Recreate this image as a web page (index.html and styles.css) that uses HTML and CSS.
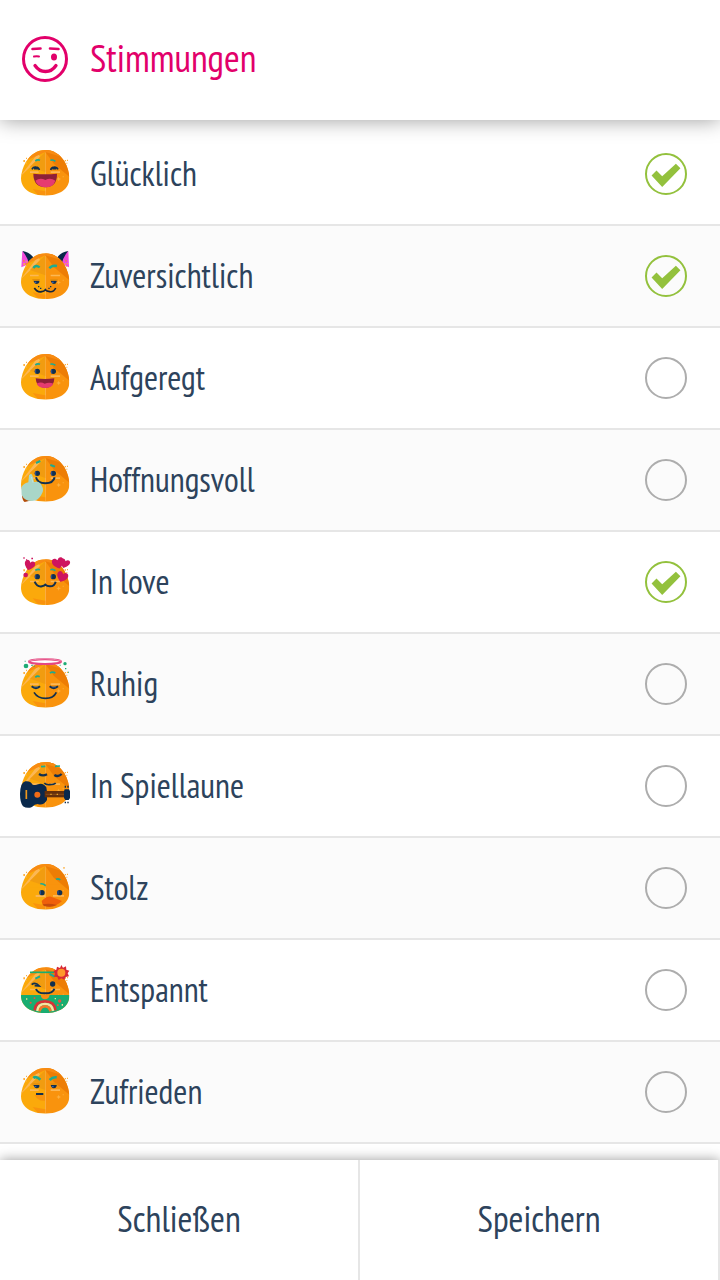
FILE: index.html
```
<!DOCTYPE html>
<html lang="de">
<head>
    <meta charset="UTF-8">
    <meta name="viewport" content="width=device-width, initial-scale=1.0">
    <title>Stimmungen</title>
    <link rel="stylesheet" href="styles.css">
</head>
<body>
    <!-- shared shapes -->
    <svg class="defs" aria-hidden="true">
        <defs>
            <path id="shape" d="M106 30C130 30 151 44 163 64C173 81 178 99 178 115C178 149 146 167 106 167C66 167 33 149 33 115C33 99 39 81 49 64C61 44 82 30 106 30Z"/>
            <clipPath id="head-clip"><use href="#shape"/></clipPath>
            <g id="head">
                <g clip-path="url(#head-clip)">
                    <path fill="#fba90b" d="M30 25h76v145H30z"/>
                    <path fill="#f9930d" d="M106 25h76v145h-76z"/>
                    <path fill="#fcb754" d="M30 110L84 40L90 50L64 78Z"/>
                    <path fill="#f19c10" d="M106 36L60 80L106 96Z"/>
                    <path fill="#ed7d05" d="M106 36L132 72L180 112V30H106Z"/>
                    <path fill="#f88b12" d="M50 62C64 40 84 28 106 28C128 28 142 37 153 50L106 36L58 58Z"/>
                    <path fill="#f9930d" d="M68 147L106 154V165H84Z"/>
                    <path fill="#fcb754" d="M60 94h26v5H60zM122 94h28v5h-28z"/>
                </g>
                <g fill="#fcb040">
                    <path d="M40 60h5v6h-5zM48 53h3v4h-3zM47 67h3v4h-3zM164 60h4v4h-4zM171 59h3v4h-3zM169 68h3v3h-3z"/>
                    <path d="M146 110l2 5 5 2-5 2-2 5-2-5-5-2 5-2zM158 109h3v3h-3z"/>
                </g>
            </g>
            <g id="brows" fill="none" stroke="#1cab92" stroke-width="5">
                <path d="M76 63Q82 58 90 61M121 61Q130 58 136 64"/>
            </g>
            <g id="eyes">
                <circle cx="82" cy="82" r="8" fill="#12304f"/>
                <circle cx="130" cy="82" r="8" fill="#12304f"/>
                <path d="M77 76v12M125 76v12" stroke="#31549c" stroke-width="3"/>
            </g>
            <g id="half-eyes">
                <path fill="#12304f" d="M70 82h18v5q-2 5-8 5t-8-7zM122 82h18v3q-2 7-8 7t-8-5z"/>
                <path d="M74 87h5M126 87h5" stroke="#3b62b5" stroke-width="4"/>
                <path fill="#e58e0b" d="M67 77h22v4H67zM121 77h22v4h-22z"/>
            </g>
            <path id="heart" d="M0 9C-7 4-12-1-10-7C-8-12-2-11 0-6C2-11 8-12 10-7C12-1 6 5 0 9Z"/>
        </defs>
    </svg>

    <header class="header">
        <svg class="header-icon" viewBox="0 0 46 46" fill="none" stroke="#e2006a" stroke-linecap="round" aria-hidden="true">
            <circle cx="23" cy="23" r="21.500" stroke-width="3"/>
            <path stroke-width="2.600" d="M10.500 13Q14 12.500 18.500 12.500M28 12.500Q32 12.500 36.500 13"/>
            <path stroke-width="2" d="M12 20.500Q15 20 17 20.500"/>
            <ellipse cx="32" cy="21" rx="3" ry="3.500" fill="#e2006a" stroke="none"/>
            <path stroke-width="3.300" d="M13 29.500Q17 35.500 23.500 35.500T34 29.500"/>
        </svg>
        <h1>Stimmungen</h1>
    </header>

    <main class="list">
        <label class="row">
            <svg class="emoji" viewBox="30 27 150 150" aria-hidden="true">
                <use href="#head"/><use href="#brows"/>
                <path d="M66 88Q69 80 78 81Q86 81 88 90M144 88Q141 80 133 81Q124 81 122 90M72 86h12M127 86h12" fill="none" stroke="#12304f" stroke-width="5"/>
                <path fill="#8e2038" d="M70 101Q106 105 141 101Q142 140 106 142Q70 140 70 101Z"/>
                <path fill="#e63b70" d="M76 122Q90 112 106 120Q122 112 136 122Q130 142 106 142Q82 140 76 122Z"/>
            </svg>
            <span class="name">Glücklich</span>
            <input type="checkbox" checked>
        </label>
        <label class="row">
            <svg class="emoji" viewBox="30 27 150 150" aria-hidden="true">
                <path fill="#08274a" d="M38 27Q59 31 71 47L49 70ZM174 27Q152 31 141 47L163 70Z"/>
                <path fill="#f04bdc" d="M37 27L34 76L57 66Q52 43 37 27ZM175 27L177 76L155 66Q160 43 175 27Z"/>
                <path fill="#f77c45" d="M39 54h5v5h-5zM46 62h5v6h-5zM166 54h4v5h-4z"/>
                <use href="#head" y="4"/>
                <path d="M70 78Q77 67 89 76M118 79Q126 69 141 72" fill="none" stroke="#1cab92" stroke-width="7"/>
                <use href="#half-eyes" y="34"/>
                <path d="M73 138Q82 152 95 149Q102 148 106 143Q110 148 119 149Q131 151 137 138" fill="none" stroke="#12233b" stroke-width="5"/>
                <path fill="#12304f" d="M84 132h4v4h-4zM90 137h4v4h-4zM120 132h4v4h-4zM115 137h4v4h-4z"/>
            </svg>
            <span class="name">Zuversichtlich</span>
            <input type="checkbox" checked>
        </label>
        <label class="row">
            <svg class="emoji" viewBox="30 27 150 150" aria-hidden="true">
                <use href="#head"/><use href="#brows"/><use href="#eyes"/>
                <path fill="#8e2038" d="M77 103Q105 107 133 103Q133 131 105 132Q78 130 77 103Z"/>
                <path fill="#e63b70" d="M80 119Q92 112 104 119Q118 113 130 119Q124 132 105 132Q87 132 80 119Z"/>
            </svg>
            <span class="name">Aufgeregt</span>
            <input type="checkbox">
        </label>
        <label class="row">
            <svg class="emoji" viewBox="30 27 150 150" aria-hidden="true">
                <use href="#head"/><use href="#eyes"/>
                <path d="M78 51L91 45M121 57L135 62" stroke="#1cab92" stroke-width="6"/>
                <path d="M78 94Q82 112 106 112Q130 112 134 94" fill="none" stroke="#12304f" stroke-width="6"/>
                <path fill="#b34c08" d="M36 146L66 163L44 168Q36 162 36 146Z"/>
                <path fill="#a9d6c8" d="M55 109L57 88Q65 79 68 91L72 108Q91 103 96 121Q104 133 94 146Q86 163 66 165Q43 165 35 147L34 125Q39 113 55 109Z"/>
                <path d="M64 93L69 110" stroke="#c3e4d9" stroke-width="3"/>
            </svg>
            <span class="name">Hoffnungsvoll</span>
            <input type="checkbox">
        </label>
        <label class="row">
            <svg class="emoji" viewBox="30 27 150 150" aria-hidden="true">
                <use href="#head" y="4"/><use href="#brows" y="4"/><use href="#eyes" y="4"/>
                <path d="M74 101Q81 118 96 115Q103 114 106 110Q111 115 119 115Q133 116 137 101" fill="none" stroke="#12304f" stroke-width="6"/>
                <g fill="#ce145e">
                    <use href="#heart" transform="translate(58 53) scale(1.500) rotate(18)"/>
                    <use href="#heart" transform="translate(145 47) scale(1.700) rotate(-14)"/>
                    <use href="#heart" transform="translate(164 48) scale(1.400) rotate(18)"/>
                    <use href="#heart" transform="translate(156 88) scale(1.600) rotate(20)"/>
                    <path d="M40 28h4v4h-4zM64 29h5v5h-5zM48 34h3v3h-3z"/>
                    <circle cx="47" cy="81" r="7"/>
                </g>
            </svg>
            <span class="name">In love</span>
            <input type="checkbox" checked>
        </label>
        <label class="row">
            <svg class="emoji" viewBox="30 27 150 150" aria-hidden="true">
                <use href="#head" y="6"/>
                <ellipse cx="105" cy="35" rx="48" ry="7" fill="#fff" stroke="#e54882" stroke-width="6"/>
                <path d="M56 33Q105 19 154 33" fill="none" stroke="#ee8caf" stroke-width="3"/>
                <path d="M76 82Q82 76 89 80M120 69Q127 64 136 69" fill="none" stroke="#1cab92" stroke-width="5"/>
                <path d="M65 109Q78 120 90 109M119 109Q131 120 144 109" fill="none" stroke="#12304f" stroke-width="6"/>
                <path d="M72 111h12M126 111h12" stroke="#315890" stroke-width="3"/>
                <path d="M72 127Q83 145 106 145Q131 145 139 127" fill="none" stroke="#12304f" stroke-width="5"/>
                <g fill="#1cab75">
                    <circle cx="48" cy="48" r="7"/><circle cx="165" cy="41" r="5"/>
                    <path d="M44 32h3v3h-3zM64 44h4v4h-4zM71 47h3v3h-3zM149 44h3v3h-3zM165 54h4v4h-4zM174 65h3v3h-3z"/>
                </g>
            </svg>
            <span class="name">Ruhig</span>
            <input type="checkbox">
        </label>
        <label class="row">
            <svg class="emoji" viewBox="30 27 150 150" aria-hidden="true">
                <use href="#head"/>
                <path d="M93 44L106 43M135 43L150 42" stroke="#1cab92" stroke-width="5"/>
                <path d="M87 66Q98 74 111 67M133 69Q144 76 155 66" fill="none" stroke="#12304f" stroke-width="7"/>
                <path d="M103 93Q107 99 119 98Q133 98 137 93" fill="none" stroke="#12304f" stroke-width="5"/>
                <path fill="#0a294c" d="M46 88Q61 86 68 98Q77 101 84 97Q99 91 109 106L111 119V144Q100 162 83 156Q74 156 66 165Q52 171 39 163Q30 152 30 126Q31 91 46 88Z"/>
                <path fill="#65300b" d="M104 117h61v19h-61z"/>
                <path d="M107 127h55" stroke="#8a4c18" stroke-width="3"/>
                <circle cx="82" cy="128" r="9" fill="#f06b16"/>
                <path d="M49 114v27" stroke="#ee981d" stroke-width="5"/>
                <path fill="#0a294c" d="M164 112h13l3 6v20l-4 6h-10l-4-6v-20zM164 101h4v6h-4zM172 101h4v6h-4zM164 149h4v5h-4zM172 149h4v5h-4z"/>
                <path fill="#e9a42b" d="M121 125h4v4h-4zM140 125h4v4h-4z"/>
            </svg>
            <span class="name">In Spiellaune</span>
            <input type="checkbox">
        </label>
        <label class="row">
            <svg class="emoji" viewBox="30 27 150 150" aria-hidden="true">
                <use href="#head"/>
                <path fill="#fba90b" d="M58 92h48v9H58z"/>
                <path fill="#f9930d" d="M106 92h48v9h-48z"/>
                <path d="M91 90Q98 87 107 95M138 76Q145 72 151 78" fill="none" stroke="#1cab92" stroke-width="5"/>
                <path fill="#fcb754" d="M77 123h29v6H77zM129 123h33v5h-33z"/>
                <circle cx="96" cy="116" r="8" fill="#12304f"/>
                <circle cx="149" cy="116" r="8" fill="#12304f"/>
                <path d="M91 110v12M144 110v12" stroke="#31549c" stroke-width="3"/>
                <path fill="#ef600b" d="M95 141Q110 126 123 128Q139 133 156 141Q139 157 121 158Q103 158 97 149Z"/>
                <path d="M97 151Q117 146 141 153Q123 161 102 156" fill="#c54b0c"/>
                <path fill="#fcb040" d="M160 39h4v5h-4z"/>
            </svg>
            <span class="name">Stolz</span>
            <input type="checkbox">
        </label>
        <label class="row">
            <svg class="emoji" viewBox="30 27 150 150" aria-hidden="true">
                <use href="#head" y="4"/>
                <g clip-path="url(#head-clip)" transform="translate(0 4)">
                    <path fill="#19ad70" d="M30 113H180V175H30z"/>
                </g>
                <path d="M60 49h72" stroke="#19ad70" stroke-width="5"/>
                <path d="M76 68L90 61M119 54L134 62" stroke="#1cab92" stroke-width="6"/>
                <path d="M65 86Q76 77 88 90L74 89" fill="none" stroke="#12304f" stroke-width="5"/>
                <circle cx="128" cy="84" r="8" fill="#12304f"/>
                <path d="M78 99Q83 113 106 112Q129 112 133 98" fill="none" stroke="#12304f" stroke-width="6"/>
                <path fill="#f98b13" d="M92 117h27q-3 13-14 13t-13-13z"/>
                <path fill="#d82935" d="M154 27l5 8 9-4 1 10 9 3-5 8 4 9-10 2-4 8-9-4-8 5-4-9-10-1 3-9-5-8 9-4 2-9 9 4z"/>
                <circle cx="154" cy="50" r="12" fill="#ff982b"/>
                <g fill="none" stroke-width="8">
                    <path stroke="#d83135" d="M74 163Q76 136 105 136Q134 136 136 163"/>
                    <path stroke="#f5e4a0" d="M82 165Q84 144 105 144Q127 144 129 165"/>
                    <path stroke="#f37828" d="M89 166Q91 151 105 151Q119 151 121 166"/>
                </g>
                <path fill="#19ad70" d="M93 170Q94 155 105 155T117 170z"/>
                <g fill="#e85442"><circle cx="149" cy="135" r="5"/><circle cx="62" cy="140" r="3"/><path d="M71 124h5v5h-5zM141 145h5v5h-5z"/></g>
                <path fill="#f4df99" d="M48 127h4v4h-4zM134 126h4v4h-4zM155 144h4v5h-4z"/>
            </svg>
            <span class="name">Entspannt</span>
            <input type="checkbox">
        </label>
        <label class="row">
            <svg class="emoji" viewBox="30 27 150 150" aria-hidden="true">
                <use href="#head"/>
                <path d="M70 60Q78 53 91 65M119 66Q129 56 140 58" fill="none" stroke="#1cab92" stroke-width="8"/>
                <use href="#half-eyes" y="-1"/>
                <path fill="#f8930d" d="M74 111h31v17q-20 3-31-17z"/>
                <path d="M78 108h22" stroke="#12304f" stroke-width="6"/>
            </svg>
            <span class="name">Zufrieden</span>
            <input type="checkbox">
        </label>
    </main>

    <footer class="footer">
        <button type="button">Schließen</button>
        <button type="button">Speichern</button>
    </footer>
</body>
</html>
```
FILE: styles.css
```
* {
    box-sizing: border-box;
}
body {
    font-family: "PT Sans Narrow", "Liberation Sans Narrow", "Roboto Condensed", Roboto, sans-serif;
    background-color: #fff;
    color: #2d435c;
    margin: 0;
    min-height: 100vh;
    display: flex;
    flex-direction: column;
}
.defs {
    position: absolute;
    width: 0;
    height: 0;
}
.header {
    position: sticky;
    top: 0;
    z-index: 1;
    display: flex;
    align-items: center;
    gap: 22px;
    height: 120px;
    padding: 0 22px 2px;
    background-color: #fff;
    color: #e2006a;
    box-shadow: 0 0 20px rgba(0, 0, 0, 0.4);
}
.header h1 {
    margin: 0;
    padding-bottom: 4px;
    font-size: 38px;
    font-weight: normal;
}
.header-icon {
    width: 46px;
    height: 46px;
}
.list {
    flex: 1;
    padding-top: 4px;
}
.row {
    display: flex;
    align-items: center;
    gap: 20px;
    height: 102px;
    padding: 0 33px 0 20px;
    border-bottom: 2px solid #e6e6e6;
    font-size: 34px;
    cursor: pointer;
}
.row:nth-child(even) {
    background-color: #fbfbfb;
}
.emoji {
    width: 50px;
    height: 50px;
    overflow: visible;
}
.name {
    flex: 1;
    padding-bottom: 2px;
}
.row input {
    appearance: none;
    width: 42px;
    height: 42px;
    margin: 0;
    border: 2px solid #adadad;
    border-radius: 50%;
    cursor: pointer;
}
.row input:checked {
    border-color: #93c13d;
}
.row input:checked::before {
    content: "";
    display: block;
    height: 100%;
    background-color: #93c13d;
    clip-path: polygon(12% 54%, 25% 41%, 40% 56%, 76% 23%, 88% 35%, 40% 84%);
}
.footer {
    position: sticky;
    bottom: 0;
    display: flex;
    height: 120px;
    background-color: #fff;
    box-shadow: 0 0 12px rgba(0, 0, 0, 0.4);
}
.footer button {
    flex: 1;
    padding: 0 0 4px;
    border: none;
    border-right: 2px solid #e6e6e6;
    background-color: #fff;
    color: inherit;
    font-family: inherit;
    font-size: 36px;
    cursor: pointer;
}
```
